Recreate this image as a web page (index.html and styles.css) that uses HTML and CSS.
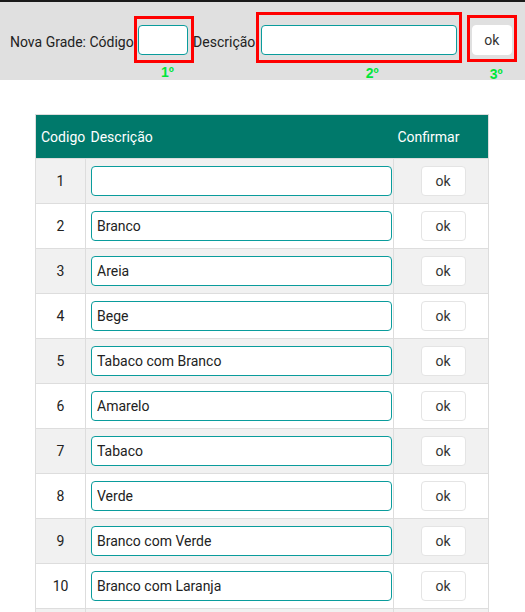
FILE: index.html
```html
<!DOCTYPE html>
<html>
	<head>
		<meta charset="utf-8" />
		<title>Grades</title>
		<link rel="stylesheet" href="styles.css">
	</head>
	<body>
		<!--barra de nova grade-->
		<div class="nova-grade">
			<span class="rotulo rotulo-cod">Nova Grade: Código:</span>
			<div class="marca marca-codigo">
				<input class="campo campo-codigo" type="text" />
				<span class="passo passo-1">1º</span>
			</div>
			<span class="rotulo rotulo-desc">Descrição:</span>
			<div class="marca marca-desc">
				<input class="campo campo-desc" type="text" />
				<span class="passo passo-2">2º</span>
			</div>
			<div class="marca marca-ok">
				<button class="btn-ok">ok</button>
				<span class="passo passo-3">3º</span>
			</div>
		</div>

		<table class="grades">
			<thead>
				<tr>
					<th class="col-cod">Codigo</th>
					<th class="col-desc">Descrição</th>
					<th class="col-conf">Confirmar</th>
				</tr>
			</thead>
			<tbody>
				<tr><td class="cod">1</td><td class="desc"><input class="campo" type="text" value="" /></td><td class="conf"><button class="btn-ok">ok</button></td></tr>
				<tr><td class="cod">2</td><td class="desc"><input class="campo" type="text" value="Branco" /></td><td class="conf"><button class="btn-ok">ok</button></td></tr>
				<tr><td class="cod">3</td><td class="desc"><input class="campo" type="text" value="Areia" /></td><td class="conf"><button class="btn-ok">ok</button></td></tr>
				<tr><td class="cod">4</td><td class="desc"><input class="campo" type="text" value="Bege" /></td><td class="conf"><button class="btn-ok">ok</button></td></tr>
				<tr><td class="cod">5</td><td class="desc"><input class="campo" type="text" value="Tabaco com Branco" /></td><td class="conf"><button class="btn-ok">ok</button></td></tr>
				<tr><td class="cod">6</td><td class="desc"><input class="campo" type="text" value="Amarelo" /></td><td class="conf"><button class="btn-ok">ok</button></td></tr>
				<tr><td class="cod">7</td><td class="desc"><input class="campo" type="text" value="Tabaco" /></td><td class="conf"><button class="btn-ok">ok</button></td></tr>
				<tr><td class="cod">8</td><td class="desc"><input class="campo" type="text" value="Verde" /></td><td class="conf"><button class="btn-ok">ok</button></td></tr>
				<tr><td class="cod">9</td><td class="desc"><input class="campo" type="text" value="Branco com Verde" /></td><td class="conf"><button class="btn-ok">ok</button></td></tr>
				<tr><td class="cod">10</td><td class="desc"><input class="campo" type="text" value="Branco com Laranja" /></td><td class="conf"><button class="btn-ok">ok</button></td></tr>
				<!--proxima linha, cortada pela janela-->
				<tr><td class="cod"></td><td class="desc"></td><td class="conf"></td></tr>
			</tbody>
		</table>
	</body>
</html>
```

FILE: styles.css
```css
*{
	padding: 0;
	margin: 0;
	box-sizing: border-box;
}
body{
	font-family: Roboto, "Liberation Sans", sans-serif;
	font-size: 14px;
	color: #222;
	background: #fff;
}

/*barra superior*/
.nova-grade{
	height: 80px;
	border-top: 2px solid #1a1a1a;
	background-color: #e0e0e0;
	padding: 10px 0 0 10px;
	display: flex;
	align-items: flex-start;
}
.rotulo{
	margin-top: 22px;
	line-height: 16px;
	white-space: nowrap;
}
.rotulo-cod{
	margin-right: -3px;
}
.rotulo-desc{
	margin-left: -1px;
}
.marca{
	position: relative;
	border: 3px solid #ff0000;
	display: flex;
}
.marca-codigo{
	margin-top: 4px;
	padding: 6px 3px 5px 1px;
}
.marca-desc{
	margin-left: -3px;
	padding: 10px 2px 5px 2px;
}
.marca-ok{
	margin-left: 5px;
	margin-top: 3px;
	padding: 7px 2px 4px 2px;
}
.campo-codigo{
	width: 50px;
}
.campo-desc{
	width: 196px;
}
.marca-ok .btn-ok{
	width: 40px;
	border-color: #fff;
}

/*numeros verdes*/
.passo{
	position: absolute;
	top: 100%;
	font-family: "Liberation Sans", sans-serif;
	font-weight: bold;
	font-size: 14px;
	line-height: 14px;
	color: #00e63a;
}
.passo-1{
	left: 24px;
	margin-top: 5px;
}
.passo-2{
	left: 107px;
	margin-top: 6px;
}
.passo-3{
	left: 20px;
	margin-top: 8px;
}

/*campos e botoes*/
.campo{
	height: 30px;
	border: 1px solid #0a9c9c;
	border-radius: 4px;
	background: #fff;
	padding: 0 5px;
	font-family: Roboto, "Liberation Sans", sans-serif;
	font-size: 14px;
	color: #222;
	outline: none;
}
.btn-ok{
	height: 30px;
	width: 45px;
	background: #fff;
	border: 1px solid #e4e4e4;
	border-radius: 4px;
	font-family: Roboto, "Liberation Sans", sans-serif;
	font-size: 14px;
	color: #333;
	cursor: pointer;
}

/*tabela*/
.grades{
	margin: 34px 0 0 35px;
	width: 453px;
	border-collapse: collapse;
	border: 1px solid #ddd;
	table-layout: fixed;
}
.grades th{
	height: 44px;
	background-color: #00796b;
	color: #fff;
	font-weight: normal;
	font-size: 14px;
	text-align: left;
	padding: 0 0 0 5px;
	border: none;
}
.col-cod{
	width: 50px;
}
.col-desc{
	width: 308px;
}
.col-conf{
	width: 95px;
	padding-left: 4px !important;
}
.grades td{
	height: 45px;
	border: 1px solid #ddd;
	padding: 0;
}
.grades tbody tr:nth-child(odd){
	background-color: #f1f1f1;
}
.cod{
	text-align: center;
}
.desc{
	padding-left: 5px !important;
}
.desc .campo{
	width: 301px;
	display: block;
}
.conf{
	text-align: center;
	padding-left: 4px !important;
}
```
